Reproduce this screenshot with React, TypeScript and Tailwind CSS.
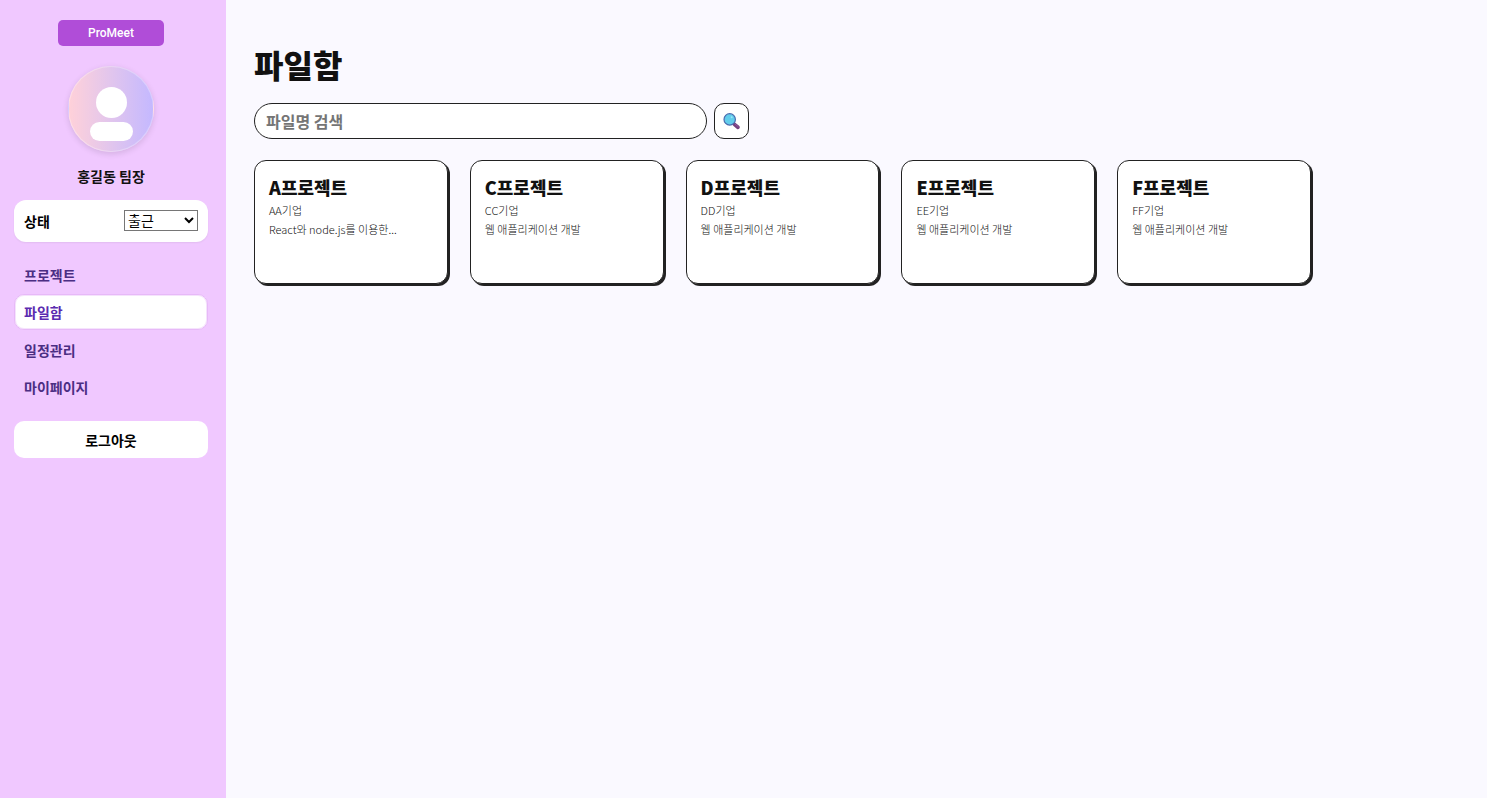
import { useState } from "react";

const projects = [
  { name: "A프로젝트", company: "AA기업", description: "React와 node.js를 이용한..." },
  { name: "C프로젝트", company: "CC기업", description: "웹 애플리케이션 개발" },
  { name: "D프로젝트", company: "DD기업", description: "웹 애플리케이션 개발" },
  { name: "E프로젝트", company: "EE기업", description: "웹 애플리케이션 개발" },
  { name: "F프로젝트", company: "FF기업", description: "웹 애플리케이션 개발" },
];

const menu = ["프로젝트", "파일함", "일정관리", "마이페이지"];

function Avatar() {
  return (
    <div className="mt-5 flex h-[86px] w-[86px] flex-col items-center rounded-full border border-white/30 bg-linear-to-r from-[#ffd1d9] to-[#c4b8ff] pt-5 shadow-[0_2px_6px_rgba(0,0,0,0.12)]">
      <div className="h-[31px] w-[31px] rounded-full bg-white" />
      <div className="mt-1 h-[19px] w-[43px] rounded-full bg-white" />
    </div>
  );
}

function SearchIcon() {
  return (
    <svg width="18" height="18" viewBox="0 0 18 18" aria-hidden="true">
      <path d="M10.2 11l1.8 1.8" stroke="#4b4f8c" strokeWidth="2" />
      <path d="M11.7 12.6l3.2 2.6" stroke="#75407f" strokeWidth="3.8" strokeLinecap="round" />
      <path d="M12.2 12.2l3 2.4" stroke="#93589b" strokeWidth="1" strokeLinecap="round" />
      <circle cx="6.7" cy="7.4" r="5.7" fill="#62cdeb" stroke="#496bae" strokeWidth="1.2" />
      <circle cx="8.7" cy="5.2" r="1" fill="#9be5f7" />
    </svg>
  );
}

function StatusSelect() {
  return (
    <div className="relative h-[21px] w-[74px]">
      <select
        id="status"
        className="block h-[21px] w-full appearance-none border border-[#767676] bg-white pr-4 pl-[3px] text-sm leading-[17px] text-black"
      >
        <option>출근</option>
        <option>퇴근</option>
      </select>
      <svg
        className="pointer-events-none absolute top-[7px] right-1"
        width="10"
        height="7"
        viewBox="0 0 10 7"
        fill="none"
        aria-hidden="true"
      >
        <path d="M1 1l4 4 4-4" stroke="#000000" strokeWidth="2" />
      </svg>
    </div>
  );
}

function Sidebar() {
  const [active, setActive] = useState("파일함");
  return (
    <aside className="flex w-[226px] shrink-0 flex-col bg-[#f0c8ff] pt-5 pr-[18px] pl-3.5">
      <div className="flex flex-col items-center">
        <button className="h-[26px] w-[106px] rounded-[5px] bg-[#b04dd8] font-[Roboto,'Liberation_Sans',sans-serif] text-xs leading-5 font-medium text-white">
          ProMeet
        </button>
        <Avatar />
        <p className="mt-3.5 text-sm leading-5 font-bold text-[#111111]">홍길동 팀장</p>
      </div>
      <div className="mt-3.5 flex h-[42px] items-start justify-between rounded-xl bg-white px-2.5 pt-2.5 shadow-[0_1px_2px_rgba(0,0,0,0.06)]">
        <label htmlFor="status" className="text-sm leading-[22px] font-bold text-black">
          상태
        </label>
        <StatusSelect />
      </div>
      <nav className="mt-[15px] flex h-[148px] flex-col justify-between">
        {menu.map((item) => (
          <a
            key={item}
            href="#"
            onClick={() => setActive(item)}
            className={
              item === active
                ? "flex h-9 items-center rounded-[10px] border border-[#e7b9f8] bg-white px-[9px] text-sm font-bold text-[#5b2bb0] ring-1 ring-[#e7b9f8]/40 ring-inset"
                : "flex h-9 items-center rounded-[10px] border border-transparent px-[9px] text-sm font-bold text-[#4b2e83]"
            }
          >
            {item}
          </a>
        ))}
      </nav>
      <button className="mt-4 h-[37px] rounded-[10px] bg-white text-sm font-bold text-black">로그아웃</button>
    </aside>
  );
}

export default function App() {
  return (
    <div className="flex min-h-screen bg-[#faf9ff] font-['Noto_Sans_CJK_KR',sans-serif]">
      <Sidebar />
      <main className="min-w-0 flex-1 px-7 pt-[42px]">
        <h1 className="text-[32px] leading-[44px] font-black text-[#111111]">파일함</h1>
        <form className="mt-[17px] flex gap-[7px]" onSubmit={(e) => e.preventDefault()}>
          <input
            type="text"
            aria-label="파일명 검색"
            placeholder="파일명 검색"
            className="h-9 w-[453px] rounded-[18px] border border-[#222222] bg-white px-[11px] text-base font-bold outline-none placeholder:text-[#757575]"
          />
          <button
            aria-label="검색"
            className="flex h-9 w-[35px] items-center justify-center rounded-[10px] border border-[#222222] bg-white"
          >
            <SearchIcon />
          </button>
        </form>
        <section className="mt-[21px] grid max-w-[1057px] grid-cols-5 gap-[22px]">
          {projects.map((p) => (
            <article
              key={p.name}
              className="min-h-[124px] rounded-xl border border-[#222222] bg-white px-3.5 pt-3 shadow-[2px_2px_0_#222222]"
            >
              <h2 className="text-lg leading-7 font-black text-[#111111]">{p.name}</h2>
              <p className="text-[11px] leading-[19px] font-light text-[#111111]">{p.company}</p>
              <p className="text-[11px] leading-[19px] font-light text-[#111111]">{p.description}</p>
            </article>
          ))}
        </section>
      </main>
    </div>
  );
}
